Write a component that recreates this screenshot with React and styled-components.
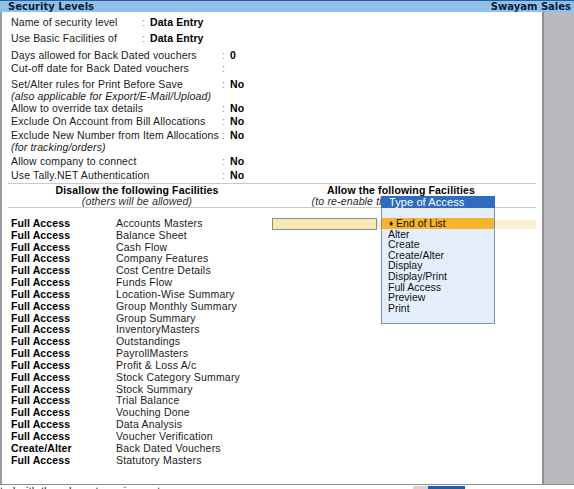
import React from 'react';
import styled, { createGlobalStyle } from 'styled-components';

const GlobalStyle = createGlobalStyle`
  html, body {
    margin: 0;
    padding: 0;
    background: #fff;
  }
`;

const basicFields = [
  { label: 'Name of security level', value: 'Data Entry', gap: 0 },
  { label: 'Use Basic Facilities of', value: 'Data Entry', gap: 4 },
];

const optionFields = [
  { label: 'Days allowed for Back Dated vouchers', value: '0', gap: 5 },
  { label: 'Cut-off date for Back Dated vouchers', value: '', gap: 1 },
  {
    label: 'Set/Alter rules for Print Before Save',
    value: 'No',
    gap: 4,
    note: '(also applicable for Export/E-Mail/Upload)',
  },
  { label: 'Allow to override tax details', value: 'No', gap: 0 },
  { label: 'Exclude On Account from Bill Allocations', value: 'No', gap: 1 },
  {
    label: 'Exclude New Number from Item Allocations',
    value: 'No',
    gap: 2,
    note: '(for tracking/orders)',
  },
  { label: 'Allow company to connect', value: 'No', gap: 2 },
  { label: 'Use Tally.NET Authentication', value: 'No', gap: 2 },
];

const facilities = [
  ['Full Access', 'Accounts Masters'],
  ['Full Access', 'Balance Sheet'],
  ['Full Access', 'Cash Flow'],
  ['Full Access', 'Company Features'],
  ['Full Access', 'Cost Centre Details'],
  ['Full Access', 'Funds Flow'],
  ['Full Access', 'Location-Wise Summary'],
  ['Full Access', 'Group Monthly Summary'],
  ['Full Access', 'Group Summary'],
  ['Full Access', 'InventoryMasters'],
  ['Full Access', 'Outstandings'],
  ['Full Access', 'PayrollMasters'],
  ['Full Access', 'Profit & Loss A/c'],
  ['Full Access', 'Stock Category Summary'],
  ['Full Access', 'Stock Summary'],
  ['Full Access', 'Trial Balance'],
  ['Full Access', 'Vouching Done'],
  ['Full Access', 'Data Analysis'],
  ['Full Access', 'Voucher Verification'],
  ['Create/Alter', 'Back Dated Vouchers'],
  ['Full Access', 'Statutory Masters'],
];

const accessTypes = [
  'Alter',
  'Create',
  'Create/Alter',
  'Display',
  'Display/Print',
  'Full Access',
  'Preview',
  'Print',
];

function App() {
  return (
    <>
      <GlobalStyle />
      <Page>
        <TitleBar>
          <span>Security Levels</span>
          <span>Swayam Sales</span>
        </TitleBar>
        <Body>
          <Main>
            <Form>
              {basicFields.map((f) => (
                <Field key={f.label} $labelWidth={131} $gap={f.gap}>
                  <Label>{f.label}</Label>
                  <Colon>:</Colon>
                  <Value>{f.value}</Value>
                </Field>
              ))}
              {optionFields.map((f) => (
                <React.Fragment key={f.label}>
                  <Field $labelWidth={211} $gap={f.gap}>
                    <Label>{f.label}</Label>
                    <Colon>:</Colon>
                    <Value>{f.value}</Value>
                  </Field>
                  {f.note && <Note>{f.note}</Note>}
                </React.Fragment>
              ))}
            </Form>

            <Divider $gap={2} />
            <Headings>
              <HeadingCol>
                <h4>Disallow the following Facilities</h4>
                <p>(others will be allowed)</p>
              </HeadingCol>
              <HeadingCol>
                <h4>Allow the following Facilities</h4>
                <p>(to re-enable the disallowed facilities)</p>
              </HeadingCol>
            </Headings>
            <Divider $gap={0} />

            <List>
              {facilities.map(([access, name], i) => (
                <ListRow key={name}>
                  <Access>{access}</Access>
                  <Facility>{name}</Facility>
                  {i === 0 && (
                    <EditCell>
                      <InputBox />
                      <Band />
                    </EditCell>
                  )}
                </ListRow>
              ))}
            </List>

            <Popup>
              <PopupTitle>Type of Access</PopupTitle>
              <PopupBody>
                <PopupItem $active>
                  <Bullet>♦</Bullet>
                  End of List
                </PopupItem>
                {accessTypes.map((t) => (
                  <PopupItem key={t}>{t}</PopupItem>
                ))}
              </PopupBody>
            </Popup>
          </Main>
          <Sidebar />
        </Body>
        <Footer>
          <FooterText>ted with the relevant requirements</FooterText>
          <ThumbTrack />
          <Thumb />
        </Footer>
      </Page>
    </>
  );
}

export default App;

const Page = styled.div`
  width: 574px;
  height: 489px;
  overflow: hidden;
  display: flex;
  flex-direction: column;
  background: #fff;
  color: #111;
  font-family: "Liberation Sans", Arial, sans-serif;
  font-size: 10.5px;
`;

const TitleBar = styled.header`
  flex: none;
  height: 11px;
  border-top: 1px solid #2d5d92;
  background: #8fc0ea;
  display: flex;
  align-items: center;
  justify-content: space-between;
  padding: 0 3px 0 8px;
  font-family: "DejaVu Sans", Verdana, sans-serif;
  font-weight: bold;
  font-size: 10px;
  line-height: 11px;
  color: #0b1d3a;
`;

const Body = styled.div`
  flex: none;
  height: 472px;
  display: flex;
  border-bottom: 1px solid #8f8f8f;
`;

const Main = styled.main`
  position: relative;
  width: 528px;
  border-left: 2px solid #9c9c9c;
  padding: 4px 6px 0 6px;
  background: #fff;
`;

const Sidebar = styled.aside`
  flex: 1;
  background: #b8babd;
  border-left: 2px solid #8e8e8e;
`;

const Form = styled.div`
  display: flex;
  flex-direction: column;
`;

const Field = styled.div`
  display: grid;
  grid-template-columns: ${(p) => p.$labelWidth}px 8px auto;
  margin-top: ${(p) => p.$gap}px;
  padding-left: 3px;
  line-height: 12px;
  white-space: nowrap;
`;

const Label = styled.span`
  color: #1a1a1a;
  letter-spacing: 0.15px;
`;

const Colon = styled.span`
  color: #8a8a8a;
`;

const Value = styled.span`
  font-weight: bold;
  color: #000;
  letter-spacing: 0.1px;
`;

const Note = styled.div`
  padding-left: 3px;
  line-height: 12px;
  font-style: italic;
  color: #1a1a1a;
  letter-spacing: 0.15px;
`;

const Divider = styled.hr`
  margin: ${(p) => p.$gap}px 0 0;
  border: none;
  height: 1px;
  background: #c9c9c9;
`;

const Headings = styled.div`
  display: grid;
  grid-template-columns: 258px 270px;
`;

const HeadingCol = styled.div`
  text-align: center;
  white-space: nowrap;
  overflow: hidden;

  h4 {
    margin: 0;
    font-size: 10.5px;
    font-weight: bold;
    line-height: 12px;
    color: #000;
    letter-spacing: 0.15px;
  }

  p {
    margin: 0;
    font-size: 10.5px;
    font-style: italic;
    line-height: 11px;
    color: #2a2a2a;
    letter-spacing: 0.15px;
  }
`;

const List = styled.div`
  margin-top: 10px;
  display: flex;
  flex-direction: column;
`;

const ListRow = styled.div`
  display: grid;
  grid-template-columns: 105px 156px 1fr;
  align-items: center;
  padding-left: 3px;
  height: 11.83px;
  line-height: 11.83px;
  white-space: nowrap;
`;

const Access = styled.span`
  font-weight: bold;
  color: #000;
  letter-spacing: 0.1px;
`;

const Facility = styled.span`
  color: #1a1a1a;
  letter-spacing: 0.2px;
`;

const EditCell = styled.div`
  display: flex;
  align-items: center;
  height: 100%;
`;

const InputBox = styled.div`
  flex: none;
  width: 103px;
  height: 10px;
  border: 1px solid #6c979c;
  background: #fde8b4;
`;

const Band = styled.div`
  flex: 1;
  height: 9px;
  background: #fdf0d2;
`;

const Popup = styled.div`
  position: absolute;
  left: 379px;
  top: 184px;
  width: 112px;
  height: 127px;
  border: 1px solid #7b93b3;
  border-top: none;
  background: #e4eefa;
  display: flex;
  flex-direction: column;
`;

const PopupTitle = styled.div`
  height: 12px;
  margin: 0 -1px;
  padding-left: 8px;
  background: #2e6cbf;
  color: #fff;
  font-size: 11px;
  line-height: 12px;
  letter-spacing: 0.1px;
`;

const PopupBody = styled.div`
  padding-top: 10px;
  display: flex;
  flex-direction: column;
`;

const PopupItem = styled.div`
  height: 10.6px;
  line-height: 10.6px;
  padding-left: ${(p) => (p.$active ? 7 : 6)}px;
  font-size: 10.5px;
  color: #111;
  background: ${(p) => (p.$active ? '#f6b42a' : 'transparent')};
  white-space: nowrap;
`;

const Bullet = styled.span`
  font-size: 8px;
  margin-right: 3px;
  vertical-align: 1px;
`;

const Footer = styled.footer`
  flex: 1;
  display: grid;
  grid-template-columns: 413px 15px 37px;
  align-items: start;
  overflow: hidden;
`;

const FooterText = styled.span`
  font-size: 11px;
  line-height: 12px;
  color: #111;
  white-space: nowrap;
`;

const ThumbTrack = styled.div`
  margin-top: 1px;
  height: 3px;
  background: #d6d6d6;
`;

const Thumb = styled.div`
  margin-top: 1px;
  height: 3px;
  background: #1f5cae;
`;
